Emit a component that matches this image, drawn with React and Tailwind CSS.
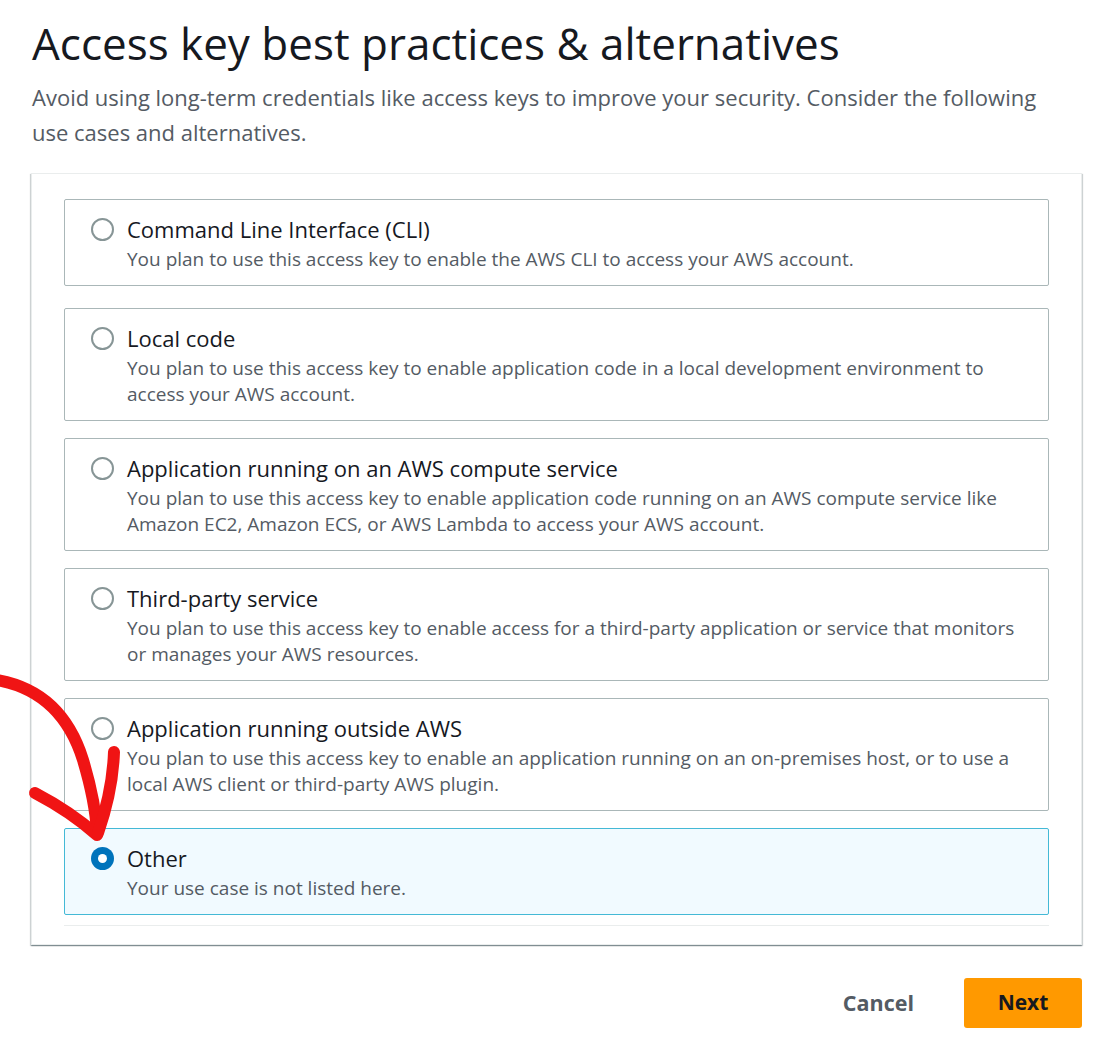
import React from "react";

const options = [
  {
    title: "Command Line Interface (CLI)",
    desc: "You plan to use this access key to enable the AWS CLI to access your AWS account.",
  },
  {
    title: "Local code",
    desc: "You plan to use this access key to enable application code in a local development environment to access your AWS account.",
  },
  {
    title: "Application running on an AWS compute service",
    desc: "You plan to use this access key to enable application code running on an AWS compute service like Amazon EC2, Amazon ECS, or AWS Lambda to access your AWS account.",
  },
  {
    title: "Third-party service",
    desc: "You plan to use this access key to enable access for a third-party application or service that monitors or manages your AWS resources.",
  },
  {
    title: "Application running outside AWS",
    desc: "You plan to use this access key to enable an application running on an on-premises host, or to use a local AWS client or third-party AWS plugin.",
  },
  {
    title: "Other",
    desc: "Your use case is not listed here.",
    selected: true,
  },
];

function Radio({ selected }) {
  if (selected) {
    return (
      <span className="mt-[3px] flex h-[23px] w-[23px] shrink-0 items-center justify-center rounded-full bg-[#0073bb]">
        <span className="h-[9px] w-[9px] rounded-full bg-white" />
      </span>
    );
  }
  return (
    <span className="mt-[3px] h-[23px] w-[23px] shrink-0 rounded-full border-2 border-[#879596] bg-white" />
  );
}

export default function App() {
  return (
    <div
      className="relative min-h-[1046px] w-[1116px] bg-white px-[31px] pt-[15px] text-[#16191f]"
      style={{ fontFamily: '"Open Sans", "Noto Sans", Arial, sans-serif' }}
    >
      <h1 className="pl-[1px] text-[44px] leading-[56px] text-[#16191f]">
        Access key best practices &amp; alternatives
      </h1>
      <p className="mt-[9px] w-[1030px] pl-[1px] text-[22px] leading-[35px] text-[#545b64]">
        Avoid using long-term credentials like access keys to improve your security. Consider the following use cases and alternatives.
      </p>

      <div className="mt-[23px] w-[1051px] border border-[#eaeded] bg-white px-[32px] pt-[25px] pb-[18px] shadow-[0_1px_1px_0_rgba(0,28,36,0.3),1px_1px_1px_0_rgba(0,28,36,0.15),-1px_1px_1px_0_rgba(0,28,36,0.15)]">
        <div className="flex flex-col">
          {options.map((o, i) => (
            <div
              key={o.title}
              className={
                "flex gap-[13px] rounded-[2px] border pl-[26px] pr-[16px] pt-[15px] pb-[13px] " +
                (i === 0 ? "" : i === 1 ? "mt-[22px] " : "mt-[17px] ") +
                (o.selected
                  ? "border-[#44b9d6] bg-[#f1faff]"
                  : "border-[#aab7b8] bg-white")
              }
            >
              <Radio selected={o.selected} />
              <div className="flex flex-col">
                <div className="text-[22px] leading-[28px] text-[#16191f]">{o.title}</div>
                <div className="mt-[3px] text-[19px] leading-[26px] text-[#545b64]">{o.desc}</div>
              </div>
            </div>
          ))}
        </div>
        <div className="mt-[10px] border-t border-[#eaeded]" />
      </div>

      <div className="mt-[33px] flex w-[1051px] items-center justify-end gap-[50px]">
        <button className="text-[21.5px] font-bold text-[#545b64]">Cancel</button>
        <button className="h-[50px] w-[118px] rounded-[3px] bg-[#ff9900] text-[21px] font-bold text-[#16191f]">
          Next
        </button>
      </div>

      <svg
        className="pointer-events-none absolute left-0 top-[660px]"
        width="140"
        height="200"
        viewBox="0 0 140 200"
        fill="none"
      >
        <path
          d="M-4 20 C 38 27, 68 52, 83 100 C 92 130, 96 152, 97 173"
          stroke="#f01414"
          strokeWidth="12"
          strokeLinecap="round"
          fill="none"
        />
        <path
          d="M35 133 C 56 144, 80 160, 97 175"
          stroke="#f01414"
          strokeWidth="12"
          strokeLinecap="round"
          fill="none"
        />
        <path
          d="M114 92 C 113 120, 106 150, 98 173"
          stroke="#f01414"
          strokeWidth="12"
          strokeLinecap="round"
          fill="none"
        />
      </svg>
    </div>
  );
}
